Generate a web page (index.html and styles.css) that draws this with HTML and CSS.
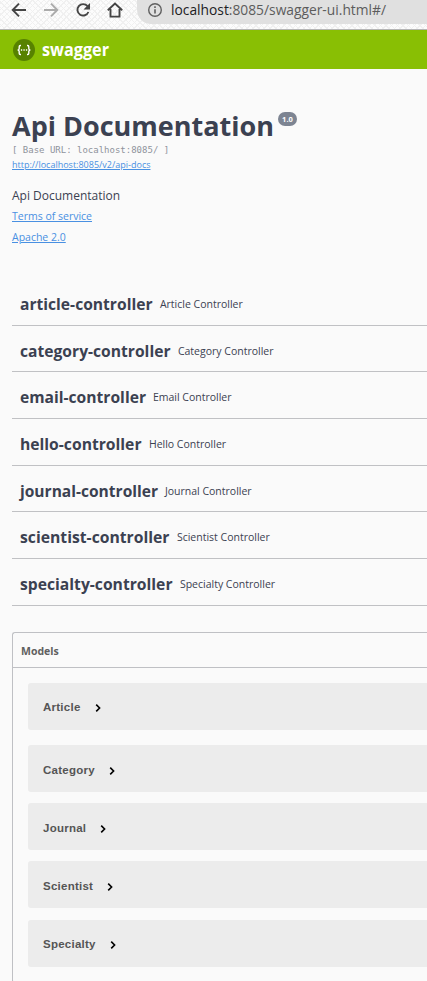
FILE: index.html
```
<!DOCTYPE html>
<html lang="en">
<head>
<meta charset="utf-8">
<title>Swagger UI</title>
<link rel="stylesheet" href="styles.css">
</head>
<body>
<header class="browser">
  <svg class="nav-icons" width="137" height="29" viewBox="0 0 137 29" fill="none" stroke-width="1.9">
    <path stroke="#454545" d="M26 10H13M19 3.7L12.7 10L19 16.3"/>
    <path stroke="#ababab" d="M44 10H57M51 3.7L57.3 10L51 16.3"/>
    <path stroke="#454545" d="M87.5 6.2A5.7 5.7 0 1 0 88.4 12"/>
    <path fill="#454545" d="M90 3v6.5h-6.5z"/>
    <path stroke="#454545" d="M107.8 10.3L115 3.6L122.2 10.3M110.5 9V16.6H119.5V9"/>
  </svg>
  <div class="address">
    <svg width="16" height="16" viewBox="0 0 16 16" fill="none" stroke="#606060" stroke-width="1.4"><circle cx="8" cy="8" r="6.3"/><path stroke-width="1.6" d="M8 7.2V11.4M8 4.3V6"/></svg>
    <svg class="url" width="218" height="24"><text x="0" y="14" textLength="215" lengthAdjust="spacingAndGlyphs"><tspan class="host">localhost</tspan>:8085/swagger-ui.html#/</text></svg>
  </div>
</header>
<div class="topbar">
  <svg width="22" height="22" viewBox="0 0 22 22" fill="none" stroke="#fff" stroke-width="1.4">
    <circle cx="11" cy="11" r="11" fill="#578200" stroke="none"/>
    <path d="M8 6.5H7.4Q6.2 6.5 6.2 7.7V9.4Q6.2 11 4.6 11Q6.2 11 6.2 12.6V14.3Q6.2 15.5 7.4 15.5H8M14 6.5H14.6Q15.8 6.5 15.8 7.7V9.4Q15.8 11 17.4 11Q15.8 11 15.8 12.6V14.3Q15.8 15.5 14.6 15.5H14"/>
    <path d="M7.9 11h1.3M10.4 11h1.3M12.9 11h1.3"/>
  </svg>
  <svg class="wordmark" width="72" height="26"><text x="0" y="19" textLength="67" lengthAdjust="spacingAndGlyphs">swagger</text></svg>
</div>
<main>
  <section class="info">
    <h1>Api Documentation<span class="version">1.0</span></h1>
    <pre>[ Base URL: localhost:8085/ ]</pre>
    <a class="docs" href="#">http://localhost:8085/v2/api-docs</a>
    <p>Api Documentation</p>
    <a class="link" href="#">Terms of service</a>
    <a class="link" href="#">Apache 2.0</a>
  </section>
  <section class="tags">
    <div class="tag"><svg width="133" height="28"><text y="20" textLength="132.5" lengthAdjust="spacingAndGlyphs">article-controller</text></svg><small>Article Controller</small></div>
    <div class="tag"><svg width="151" height="28"><text y="20" textLength="150.5" lengthAdjust="spacingAndGlyphs">category-controller</text></svg><small>Category Controller</small></div>
    <div class="tag"><svg width="126" height="28"><text y="20" textLength="126" lengthAdjust="spacingAndGlyphs">email-controller</text></svg><small>Email Controller</small></div>
    <div class="tag"><svg width="122" height="28"><text y="20" textLength="121.5" lengthAdjust="spacingAndGlyphs">hello-controller</text></svg><small>Hello Controller</small></div>
    <div class="tag"><svg width="138" height="28"><text y="20" textLength="138" lengthAdjust="spacingAndGlyphs">journal-controller</text></svg><small>Journal Controller</small></div>
    <div class="tag"><svg width="150" height="28"><text y="20" textLength="149.5" lengthAdjust="spacingAndGlyphs">scientist-controller</text></svg><small>Scientist Controller</small></div>
    <div class="tag"><svg width="153" height="28"><text y="20" textLength="152.5" lengthAdjust="spacingAndGlyphs">specialty-controller</text></svg><small>Specialty Controller</small></div>
  </section>
  <section class="models">
    <h4>Models</h4>
    <div class="model first">Article<svg width="7" height="10"><path d="M1.2 1.6L4.6 5L1.2 8.4"/></svg></div>
    <div class="model">Category<svg width="7" height="10"><path d="M1.2 1.6L4.6 5L1.2 8.4"/></svg></div>
    <div class="model">Journal<svg width="7" height="10"><path d="M1.2 1.6L4.6 5L1.2 8.4"/></svg></div>
    <div class="model">Scientist<svg width="7" height="10"><path d="M1.2 1.6L4.6 5L1.2 8.4"/></svg></div>
    <div class="model">Specialty<svg width="7" height="10"><path d="M1.2 1.6L4.6 5L1.2 8.4"/></svg></div>
  </section>
</main>
</body>
</html>
```
FILE: styles.css
```
* { box-sizing: border-box; }
body { margin: 0; height: 981px; overflow: hidden; background: #fafafa; color: #3b4151; font-family: "Open Sans", sans-serif; }
svg { display: block; flex: none; overflow: visible; }
.browser { display: flex; align-items: flex-start; height: 30px; border-bottom: 1px solid #b5b5b5; background: repeating-linear-gradient(45deg, transparent 0 3px, #f0f0f0 3px 4px), repeating-linear-gradient(-45deg, #fcfcfc 0 3px, #f0f0f0 3px 4px); }
.address { display: flex; flex: 1; height: 24px; padding: 2px 0 0 10px; gap: 8px; background: #e0e0e0; border-bottom-left-radius: 13px 15px; }
.url { margin-top: -1px; font-size: 15px; fill: #5c5c5c; }
.host { fill: #202124; }
.topbar { display: flex; align-items: center; gap: 7px; height: 39px; padding-left: 13px; background: #89bf04; }
.wordmark { font-size: 17px; font-weight: 700; fill: #fff; }
main { padding-left: 12px; }
.info { height: 210px; padding-top: 38px; }
h1 { display: flex; align-items: flex-start; margin: 0; height: 37px; font-size: 27px; line-height: 38px; white-space: nowrap; }
.version { margin: 5px 0 0 4px; width: 19px; height: 14px; border-radius: 7px; background: #7d8492; color: #fff; font-size: 7.5px; line-height: 14px; text-align: center; }
pre { margin: 0; height: 13px; color: #8f939c; font: 9px/13px "DejaVu Sans Mono", monospace; }
a { display: block; color: #4990e2; text-decoration: underline; }
.docs { font-size: 9px; line-height: 15px; }
p { margin: 15px 0 1px; font-size: 12px; line-height: 18px; }
.link { font-size: 10.5px; line-height: 21px; }
.tag { display: flex; align-items: center; gap: 7.4px; height: 46.7px; padding: 4px 0 0 7.5px; border-bottom: 1px solid #c0c1c4; }
.tag svg { font-size: 16.5px; font-weight: 700; fill: #3b4151; }
.tag small { font-size: 10.5px; line-height: 16px; }
.models { height: 351px; margin-top: 26.1px; border: 1px solid #bfc0c4; border-right: 0; border-radius: 3px 0 0 3px; }
h4 { margin: 0; height: 35px; padding-left: 8px; border-bottom: 1px solid #bfc0c4; color: #606060; font-size: 10.5px; line-height: 36px; }
.model { display: flex; align-items: center; height: 47px; margin: 0 0 11.2px 15px; padding: 2px 0 0 15px; border-radius: 3px 0 0 3px; background: #ececec; color: #555; font: 700 11.5px "Liberation Sans", sans-serif; letter-spacing: .25px; }
.model.first { margin-top: 15px; margin-bottom: 15.2px; }
.model svg { margin: 2px 0 0 14px; fill: none; stroke: #000; stroke-width: 1.6; }
```
